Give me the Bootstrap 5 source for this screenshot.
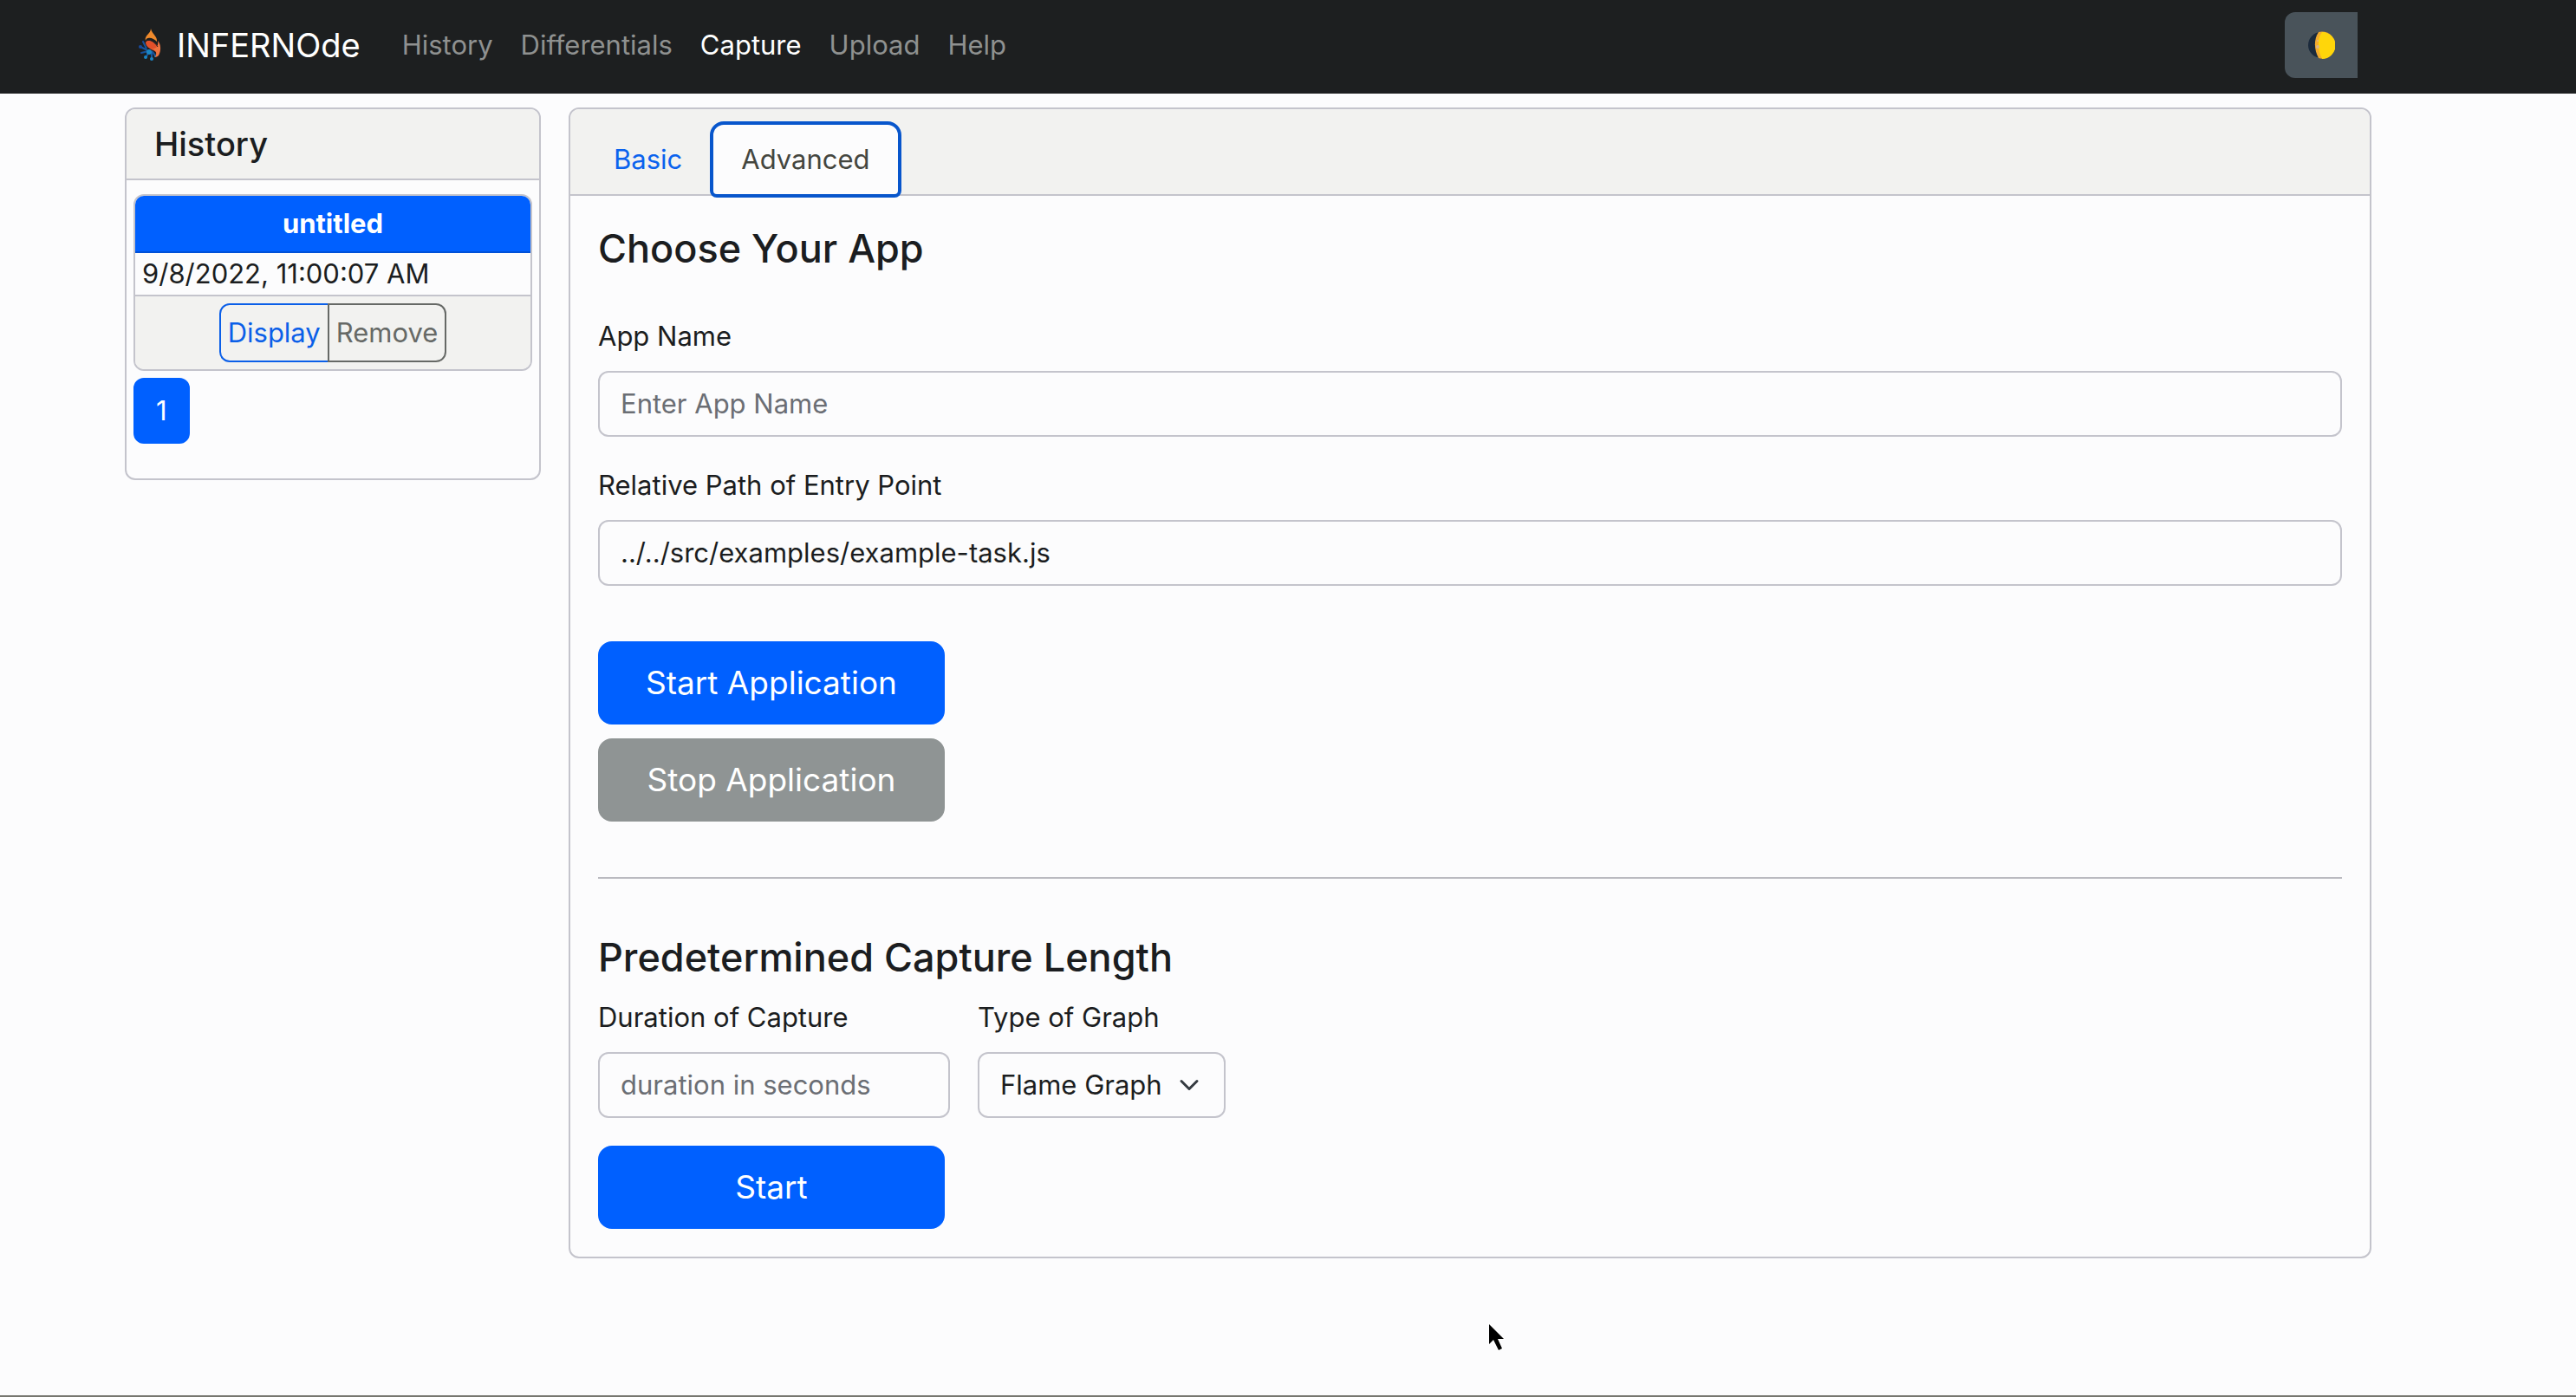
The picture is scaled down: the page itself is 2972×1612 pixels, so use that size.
<!DOCTYPE html>
<html lang="en">
<head>
<meta charset="utf-8">
<meta name="viewport" content="width=device-width, initial-scale=1">
<title>INFERNOde</title>
<link href="https://cdn.jsdelivr.net/npm/bootstrap@5.3.0/dist/css/bootstrap.min.css" rel="stylesheet">
<style>
:root{font-size:32px;--bs-border-width:2px;--bs-border-radius:12px}
body{font-family:Inter,"Liberation Sans",sans-serif;font-size:31px;line-height:48px;background:#fcfcfd;color:#1b1d20;min-height:100vh;border-bottom:2px solid #777770}
.topbar{background:#1d1f20;padding:14px 252px 18px 160px}
.topbar .navbar-brand{font-size:38px;color:#fff;margin-right:32px;gap:18px;padding:0}
.topbar .nav-link{padding:14px 16px;font-size:31px;color:#8f9190}
.topbar .nav-link.active{color:#fff}
.logo{width:26px;height:38px}
.topbar .theme-btn{background:#49535a;border:0;border-radius:12px 0 0 12px;width:84px;height:76px;padding:0}
.page{padding:16px 236px 64px 144px;gap:32px}
.sidebar{flex:0 0 480px}
.card{--bs-card-border-width:2px;--bs-card-border-color:#c4c4cc;--bs-card-border-radius:12px;--bs-card-inner-border-radius:10px;--bs-card-cap-bg:#f2f2f0;--bs-card-bg:#fcfcfd}
.side-head{padding:16px 32px}
.side-body{padding:16px 8px 40px}
.entry{margin-bottom:8px}
.entry-head,.entry-foot{padding:8px}
.entry-time{padding:0 8px}
.h-side{font-size:38px;line-height:48px}
.h-main{font-size:45px;line-height:58px;margin-bottom:16px}
.btn,.form-control,.form-select{font-size:31px;line-height:48px;border-width:2px;border-radius:12px}
.btn-primary,.btn-primary:hover{background:#0060ff;border-color:#0060ff}
.entry-head{background:#0060ff;border-bottom-color:#0050d8}
.entry-foot .btn{padding:8px}
.btn-outline-primary{color:#0b5fe8;border-color:#0b5fe8}
.btn-outline-secondary{color:#666966;border-color:#666966}
.form-control,.form-select{background-color:#fcfcfd;border-color:#c4c4cc;color:#1b1d20}
.form-control::placeholder{color:#6b6e74}
.form-select{background-size:32px 24px;width:286px}
.form-label{display:block;margin-bottom:16px}
.btn-lg{width:400px;font-size:37px;line-height:60px;padding:16px 0;border-radius:16px}
.btn-stop,.btn-stop:disabled{background:#8f9494;border-color:#8f9494;color:#fff;opacity:1}
.tab-head{padding:16px 32px 0}
.tab-head .nav-tabs{--bs-nav-tabs-border-width:2px;--bs-nav-tabs-border-radius:12px;margin:0 -16px;border-bottom:0}
.nav-tabs .nav-link{padding:16px 32px;font-size:31px;color:#0b63ee;margin-bottom:-2px}
.nav-tabs .nav-link.active{background:#fcfcfd;color:#44463f;border-color:#fcfcfd;outline:4px solid #0856cc;outline-offset:-2px;border-radius:14px 14px 6px 6px}
.capture-form{padding:32px}
.app-title{margin-bottom:48px}
.app-actions{gap:16px;margin-top:64px}
.capture-form hr{border-top:2px solid #babac0;opacity:1;margin:64px 0 62px}
.options{gap:32px;margin-bottom:32px}
.duration{width:406px}
.pointer{position:absolute;left:1714px;top:1524px;width:28px;height:40px}
</style>
</head>
<body>
<nav class="topbar navbar navbar-expand d-flex flex-nowrap">
  <a class="navbar-brand d-flex align-items-center" href="#">
    <svg class="logo" viewBox="0 0 26 38" aria-hidden="true">
      <g stroke="#17549c" stroke-width="2" fill="none"><path d="M5 15l4 8M2 21l8 4M3 28l8-2M8 34l4-8M15 36v-9M20 32l-5-6"/></g>
      <g fill="#174a9c"><circle cx="5" cy="15" r="1"/><circle cx="2" cy="21" r="2"/><circle cx="3" cy="28" r="1"/></g>
      <g fill="#1a86c4"><circle cx="8" cy="33" r="2"/><circle cx="15" cy="35" r="2"/><circle cx="12" cy="27" r="3"/><circle cx="19" cy="32" r="1"/></g>
      <path d="M14 0c1 6 8 9 7 15-3-3-7-5-10-4-2 0-3 2-3 3-2-6 6-8 6-14z" fill="#ef8a2c"/>
      <path d="M8 16c2-5 8-2 12 2 5 4 5 9 2 12-1-6-13-5-14-14z" fill="#e2502a"/>
      <path d="M22 14c4 4 4 12 1 17-1 1-3 2-4 2 3-6 0-8-4-10 6 1 8-4 7-9z" fill="#ee7440"/>
      <path d="M9 14c4-2 9 1 13 7" stroke="#1d1f20" stroke-width="1" fill="none"/>
    </svg>
    <span>INFERNOde</span>
  </a>
  <ul class="navbar-nav me-auto">
    <li class="nav-item"><a class="nav-link" href="#">History</a></li>
    <li class="nav-item"><a class="nav-link" href="#">Differentials</a></li>
    <li class="nav-item"><a class="nav-link active" aria-current="page" href="#">Capture</a></li>
    <li class="nav-item"><a class="nav-link" href="#">Upload</a></li>
    <li class="nav-item"><a class="nav-link" href="#">Help</a></li>
  </ul>
  <button type="button" class="btn theme-btn d-flex align-items-center justify-content-center" aria-label="Toggle theme">
    <svg width="32" height="32" viewBox="0 0 32 32" aria-hidden="true">
      <circle cx="16" cy="16" r="15" fill="#1b2a3c"/>
      <path d="M13 1a15.500 15.500 0 1 1 0 30C8 22 7 10 13 1z" fill="#f2ab2e"/>
      <path d="M17 1a15.500 15.500 0 0 1 0 31C12 22 11 9 17 1z" fill="#ffd60a"/>
      <circle cx="12" cy="18" r="2" fill="#d8b48a"/><circle cx="12" cy="11" r="1" fill="#d8b48a"/>
    </svg>
  </button>
</nav>

<main class="page d-flex align-items-start">
  <aside class="sidebar card">
    <div class="card-header side-head"><h1 class="h-side mb-0">History</h1></div>
    <div class="card-body side-body">
      <div class="card entry">
        <div class="card-header entry-head text-white text-center fw-bold">untitled</div>
        <div class="card-body entry-time">9/8/2022, 11:00:07 AM</div>
        <div class="card-footer entry-foot d-flex justify-content-center">
          <div class="btn-group">
            <button type="button" class="btn btn-outline-primary">Display</button>
            <button type="button" class="btn btn-outline-secondary">Remove</button>
          </div>
        </div>
      </div>
      <button type="button" class="btn btn-primary d-block">1</button>
    </div>
  </aside>

  <section class="card flex-grow-1">
    <div class="card-header tab-head">
      <ul class="nav nav-tabs">
        <li class="nav-item"><a class="nav-link" href="#">Basic</a></li>
        <li class="nav-item"><a class="nav-link active" href="#">Advanced</a></li>
      </ul>
    </div>
    <form class="card-body capture-form">
      <h2 class="h-main app-title">Choose Your App</h2>
      <label class="form-label" for="appName">App Name</label>
      <input class="form-control" id="appName" type="text" placeholder="Enter App Name">
      <label class="form-label mt-3" for="entry">Relative Path of Entry Point</label>
      <input class="form-control" id="entry" type="text" value="../../src/examples/example-task.js">
      <div class="app-actions d-flex flex-column align-items-start">
        <button type="button" class="btn btn-primary btn-lg">Start Application</button>
        <button type="button" class="btn btn-stop btn-lg" disabled>Stop Application</button>
      </div>
      <hr>
      <h2 class="h-main">Predetermined Capture Length</h2>
      <div class="options d-flex">
        <div><label class="form-label" for="dur">Duration of Capture</label>
          <input class="form-control duration" id="dur" type="text" placeholder="duration in seconds"></div>
        <div><label class="form-label" for="graph">Type of Graph</label>
          <select class="form-select" id="graph"><option>Flame Graph</option></select></div>
      </div>
      <button type="button" class="btn btn-primary btn-lg">Start</button>
    </form>
  </section>
</main>
<svg class="pointer" viewBox="0 0 28 40" aria-hidden="true"><path d="M4 4v23l5-5 6 12 4-2-5-11h7z" fill="#000" stroke="#fff" stroke-width="2" paint-order="stroke"/></svg>
<script src="https://cdn.jsdelivr.net/npm/bootstrap@5.3.0/dist/js/bootstrap.bundle.min.js"></script>
</body>
</html>
